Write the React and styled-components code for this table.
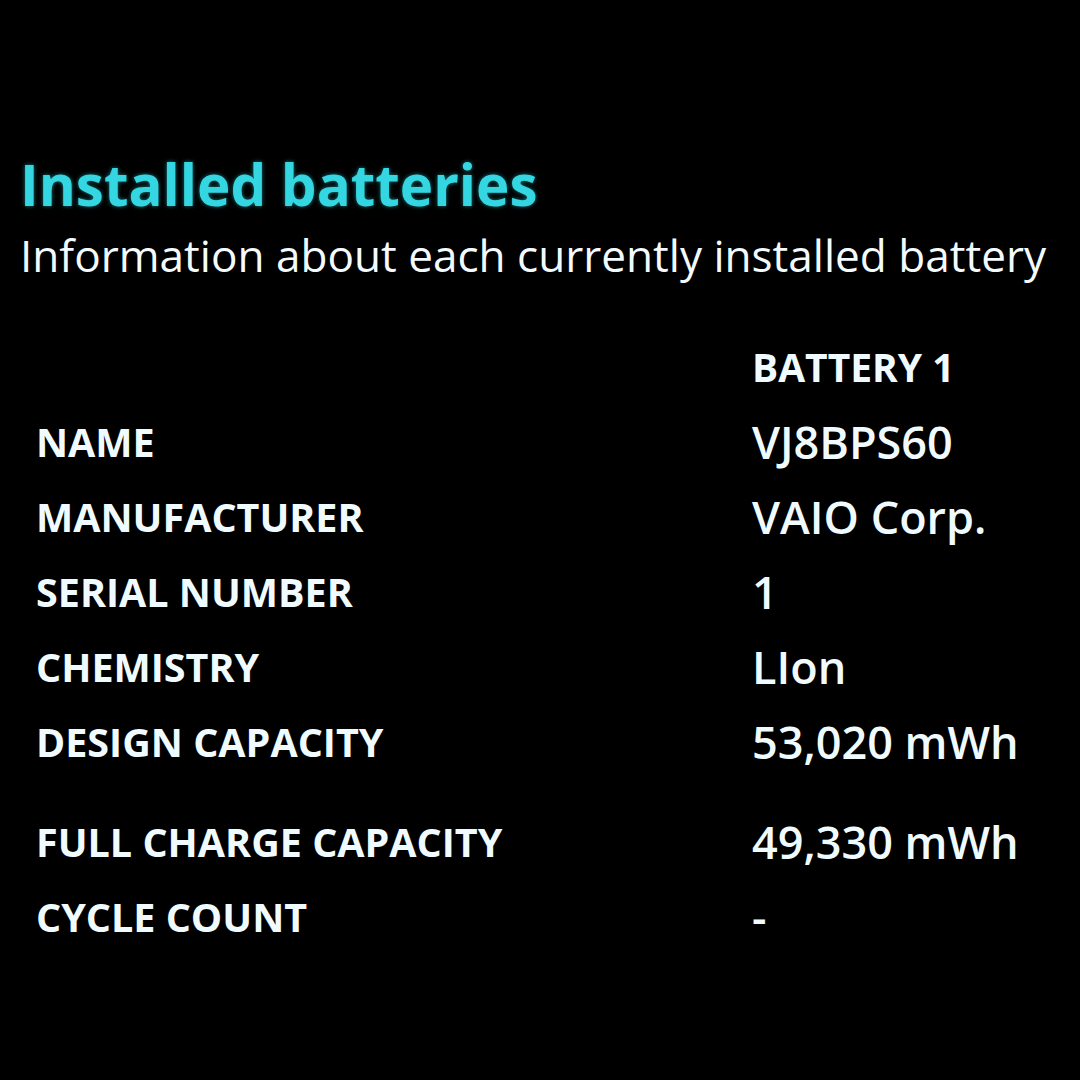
import React from "react";
import styled, { createGlobalStyle } from "styled-components";

const GlobalStyle = createGlobalStyle`
  html, body {
    margin: 0;
    padding: 0;
    background: #000;
  }
  body {
    font-family: "Open Sans", "Noto Sans", "Liberation Sans", sans-serif;
    color: #f0fbff;
  }
`;

const Page = styled.div`
  width: 1080px;
  height: 1080px;
  background: #000;
  padding: 149px 0 0 20px;
  box-sizing: border-box;
  overflow: hidden;
`;

const Title = styled.h1`
  margin: 0;
  font-size: 56.5px;
  font-weight: 700;
  line-height: 72px;
  color: #34d6e2;
  white-space: nowrap;
  text-shadow: 0 0 4px rgba(40, 220, 230, 0.55);
`;

const Subtitle = styled.p`
  margin: 0;
  font-size: 44.1px;
  font-weight: 400;
  line-height: 68px;
  white-space: nowrap;
  color: #f4fbff;
`;

const Table = styled.div`
  margin-top: 40px;
  padding-left: 16px;
  display: grid;
  grid-template-columns: 716px 1fr;
  align-items: start;
`;

const Label = styled.div`
  box-sizing: border-box;
  height: 75px;
  font-size: 39.5px;
  font-weight: 700;
  line-height: 73px;
  padding-top: 2px;
  margin-top: ${(p) => (p.$gap ? "25px" : "0")};
  text-transform: uppercase;
  white-space: nowrap;
`;

const Value = styled.div`
  box-sizing: border-box;
  height: 75px;
  font-size: ${(p) => (p.$head ? "39px" : "45px")};
  font-weight: ${(p) => (p.$head ? 700 : 600)};
  line-height: 75px;
  margin-top: ${(p) => (p.$gap ? "25px" : "0")};
  white-space: nowrap;
`;

const rows = [
  ["Name", "VJ8BPS60"],
  ["Manufacturer", "VAIO Corp."],
  ["Serial number", "1"],
  ["Chemistry", "LIon"],
  ["Design capacity", "53,020 mWh"],
  ["Full charge capacity", "49,330 mWh", true],
  ["Cycle count", "-"],
];

export default function App() {
  return (
    <Page>
      <GlobalStyle />
      <Title>Installed batteries</Title>
      <Subtitle>Information about each currently installed battery</Subtitle>
      <Table>
        <Label />
        <Value $head>BATTERY 1</Value>
        {rows.map(([label, value, gap]) => (
          <React.Fragment key={label}>
            <Label $gap={gap}>{label}</Label>
            <Value $gap={gap}>{value}</Value>
          </React.Fragment>
        ))}
      </Table>
    </Page>
  );
}
